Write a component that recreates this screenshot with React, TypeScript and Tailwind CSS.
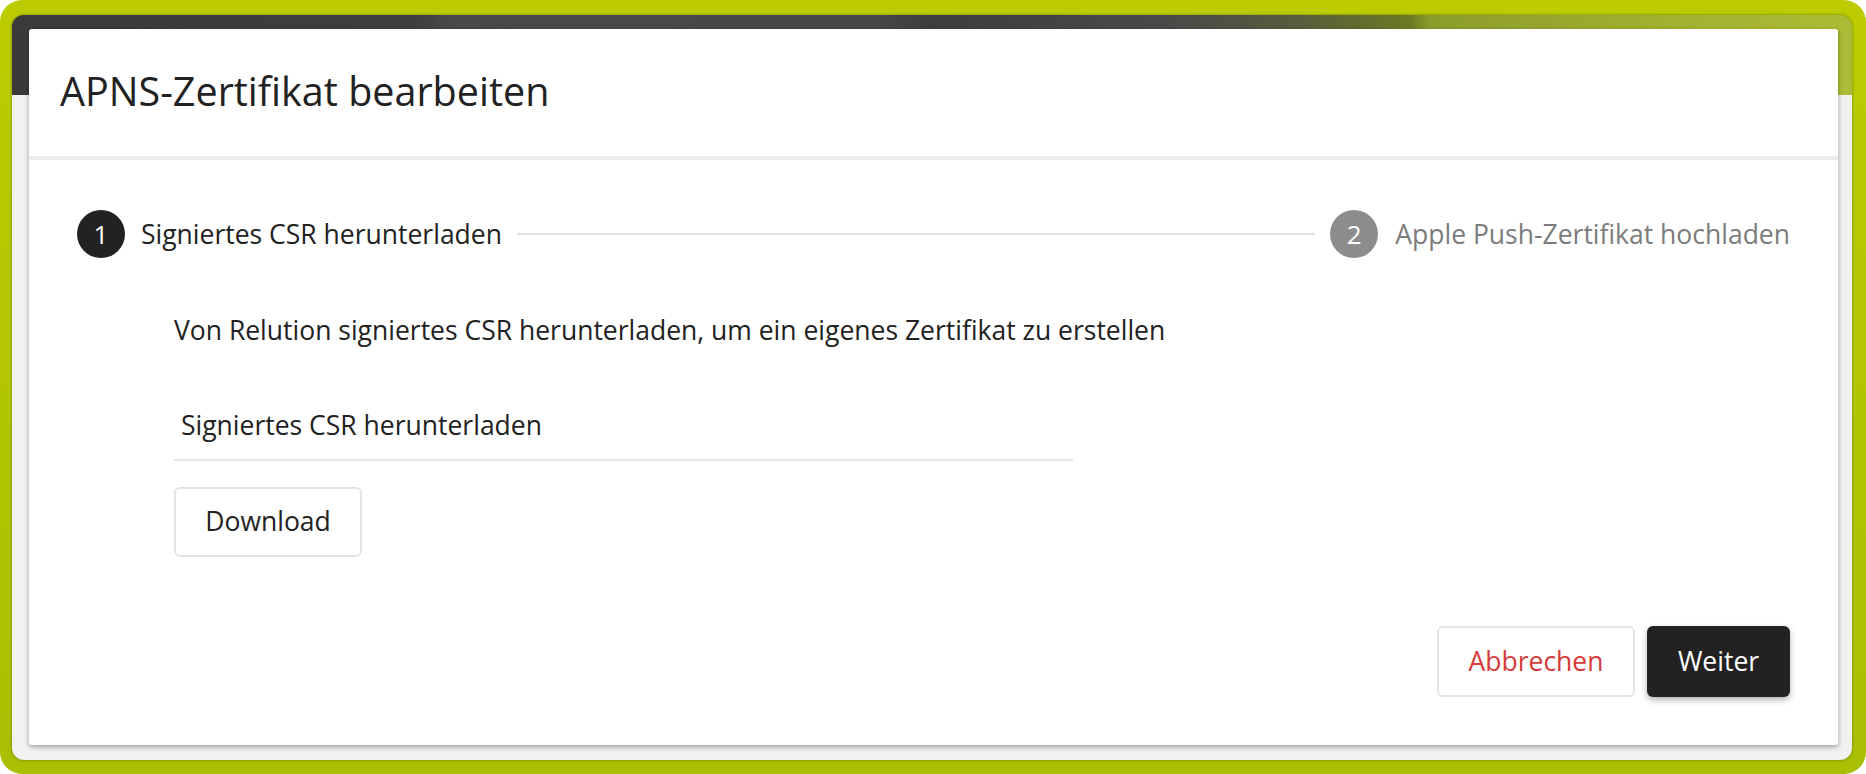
import React from "react";

export default function App() {
  return (
    <div className="w-[1866px] h-[774px] bg-white">
      <div className="w-full h-full rounded-[22px] bg-gradient-to-b from-[#bccc00] to-[#a9bf02] pl-[12px] pr-[14px] pt-[15px] pb-[14px]">
        <div className="h-full rounded-[12px] bg-[#f1f1ef] bg-[linear-gradient(to_right,#3a3a3a_0%,#3e3e3e_22%,#4a4a4a_24%,#474747_47%,#3d3d3d_50%,#4a4a48_63%,#575d3c_70%,#6b7a22_76%,#8c9c2a_77%,#a2b12f_90%,#acbc36_100%)] bg-no-repeat bg-[length:100%_80px] shadow-[0_0_3px_rgba(60,70,0,0.6)] pl-[17px] pr-[14px] pt-[14px] pb-[15px] flex">
          <div
            className="flex-1 bg-white rounded-[3px] shadow-[0_2px_5px_rgba(0,0,0,0.35)] flex flex-col text-[#222222]"
            style={{ fontFamily: '"Open Sans", "Noto Sans", sans-serif' }}
          >
            <div className="h-[131px] border-b-[4px] border-[#ececec] flex items-center pl-[31px] shrink-0">
              <h1 className="text-[39.5px] leading-none font-normal text-[#222222] -mt-[2px]">
                APNS-Zertifikat bearbeiten
              </h1>
            </div>

            <div className="flex-1 flex flex-col px-[48px] pt-[50px]">
              <div className="h-[48px] flex items-center">
                <div className="w-[48px] h-[48px] rounded-full bg-[#222222] text-white flex items-center justify-center text-[26px] leading-none shrink-0">
                  1
                </div>
                <span className="ml-[16px] text-[26.5px] leading-none whitespace-nowrap">
                  Signiertes CSR herunterladen
                </span>
                <div className="flex-1 h-[2px] bg-[#e2e2e2] mx-[15px]" />
                <div className="w-[48px] h-[48px] rounded-full bg-[#8c8c8c] text-white flex items-center justify-center text-[26px] leading-none shrink-0">
                  2
                </div>
                <span className="ml-[17px] text-[26.5px] leading-none whitespace-nowrap text-[#7c7c7c]">
                  Apple Push-Zertifikat hochladen
                </span>
              </div>

              <div className="pl-[97px] flex flex-col">
                <p className="mt-[56px] text-[26.5px] leading-[32px]">
                  Von Relution signiertes CSR herunterladen, um ein eigenes Zertifikat zu erstellen
                </p>

                <div className="mt-[63px] w-[899px] border-b-2 border-[#e6e6e6] pb-[18px] pl-[7px]">
                  <span className="text-[26.5px] leading-[32px] block">Signiertes CSR herunterladen</span>
                </div>

                <div className="mt-[26px]">
                  <button className="h-[70px] w-[188px] rounded-[6px] border-2 border-[#e3e3e3] bg-white text-[26.5px] text-[#222222] flex items-center justify-center">
                    Download
                  </button>
                </div>
              </div>

              <div className="mt-[69px] flex justify-end gap-[12px]">
                <button className="h-[71px] w-[198px] rounded-[6px] border-2 border-[#e6e6e6] bg-white text-[26.5px] text-[#d63b3b] flex items-center justify-center">
                  Abbrechen
                </button>
                <button className="h-[71px] w-[143px] rounded-[6px] bg-[#222222] text-[26.5px] text-white flex items-center justify-center shadow-[0_3px_6px_rgba(0,0,0,0.3)]">
                  Weiter
                </button>
              </div>
            </div>
          </div>
        </div>
      </div>
    </div>
  );
}
